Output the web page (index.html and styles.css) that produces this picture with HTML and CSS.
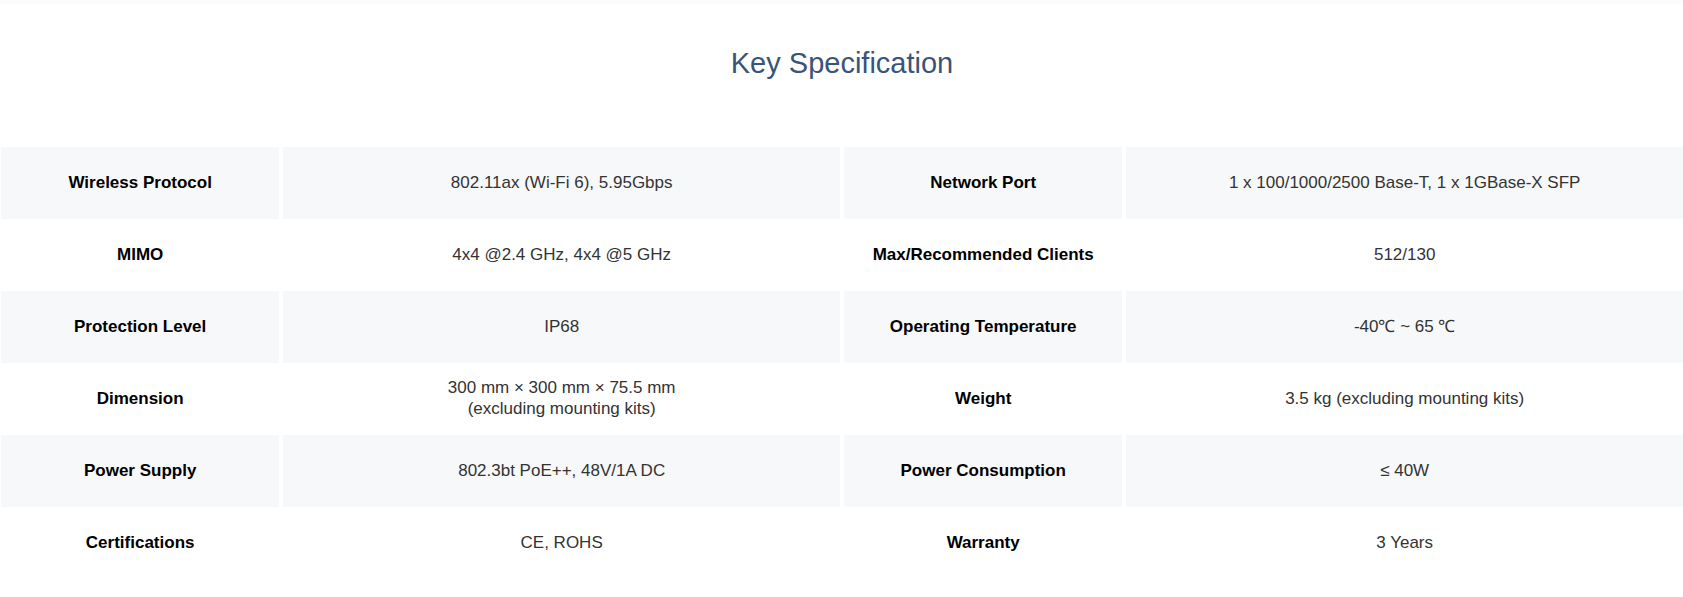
FILE: index.html
```html
<!DOCTYPE html>
<html lang="en">
<head>
<meta charset="utf-8">
<title>Key Specification</title>
<link rel="stylesheet" href="styles.css">
</head>
<body>
<div class="topbar"></div>
<section class="specs">
  <h2 class="specs-title">Key Specification</h2>
  <div class="spec-grid">
    <div class="cell label shade">Wireless Protocol</div>
    <div class="cell value shade">802.11ax (Wi-Fi 6), 5.95Gbps</div>
    <div class="cell label shade">Network Port</div>
    <div class="cell value shade">1 x 100/1000/2500 Base-T, 1 x 1GBase-X SFP</div>

    <div class="cell label">MIMO</div>
    <div class="cell value">4x4 @2.4 GHz, 4x4 @5 GHz</div>
    <div class="cell label">Max/Recommended Clients</div>
    <div class="cell value">512/130</div>

    <div class="cell label shade">Protection Level</div>
    <div class="cell value shade">IP68</div>
    <div class="cell label shade">Operating Temperature</div>
    <div class="cell value shade">-40℃ ~ 65 ℃</div>

    <div class="cell label">Dimension</div>
    <div class="cell value">300 mm × 300 mm × 75.5 mm<br>(excluding mounting kits)</div>
    <div class="cell label">Weight</div>
    <div class="cell value">3.5 kg (excluding mounting kits)</div>

    <div class="cell label shade">Power Supply</div>
    <div class="cell value shade">802.3bt PoE++, 48V/1A DC</div>
    <div class="cell label shade">Power Consumption</div>
    <div class="cell value shade">≤ 40W</div>

    <div class="cell label">Certifications</div>
    <div class="cell value">CE, ROHS</div>
    <div class="cell label">Warranty</div>
    <div class="cell value">3 Years</div>
  </div>
</section>
</body>
</html>
```
FILE: styles.css
```css
* { box-sizing: border-box; }
html, body {
  margin: 0;
  padding: 0;
  background: #ffffff;
  font-family: "Liberation Sans", Arial, sans-serif;
}
.topbar {
  height: 4px;
  background: #fbfbfb;
}
.specs {
  padding: 41px 0 18px 1px;
}
.specs-title {
  margin: 0 0 66px;
  text-align: center;
  font-size: 29px;
  line-height: 36px;
  font-weight: normal;
  color: #3a5479;
}
.spec-grid {
  display: grid;
  grid-template-columns: 1fr 2fr 1fr 2fr;
  grid-auto-rows: 72px;
  column-gap: 4px;
}
.cell {
  display: flex;
  align-items: center;
  justify-content: center;
  text-align: center;
  font-size: 17px;
  line-height: 21px;
  padding: 0 10px 2px;
}
.shade { background: #f7f8fa; }
.label { font-weight: bold; color: #000; }
.value { color: #333; }
```
